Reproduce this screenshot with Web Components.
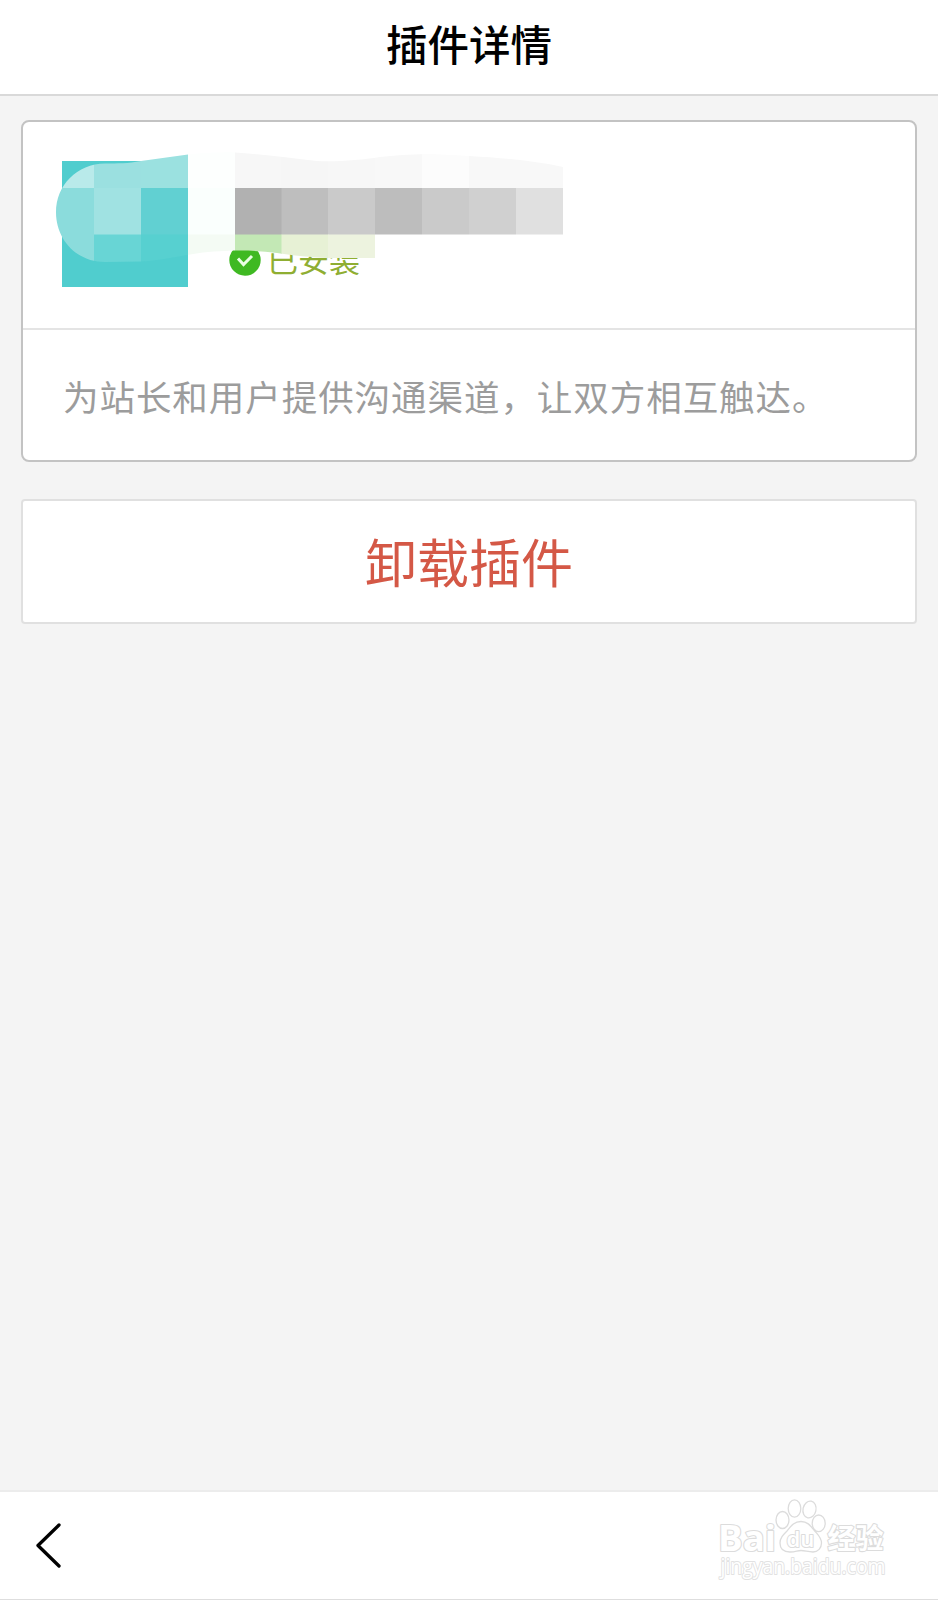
<!DOCTYPE html>
<html lang="zh-CN">
<head>
<meta charset="utf-8">
<title>插件详情</title>
<style>
  html, body { margin: 0; height: 100%; }
  body { background: #f4f4f4; font-family: "Noto Sans CJK SC", sans-serif; }
</style>
</head>
<body>
<plugin-page>
  <nav-header slot="header">插件详情</nav-header>
  <plugin-card>
    <install-status slot="status">已安装</install-status>
    为站长和用户提供沟通渠道，让双方相互触达。
  </plugin-card>
  <danger-button>卸载插件</danger-button>
  <tool-bar slot="footer"><baidu-mark></baidu-mark></tool-bar>
</plugin-page>

<script>
class BaseElement extends HTMLElement {
  constructor() {
    super();
    this.attachShadow({ mode: 'open' });
  }

  connectedCallback() {
    this.shadowRoot.innerHTML = this.render();
  }
}

class PluginPage extends BaseElement {
  render() {
    return `
      <style>
        :host { display: flex; flex-direction: column; height: 1600px; overflow: hidden; }
        main { flex: 1; display: flex; flex-direction: column; gap: 37px; padding: 24px 21px 0; }
      </style>
      <slot name="header"></slot>
      <main><slot></slot></main>
      <slot name="footer"></slot>
    `;
  }
}

class NavHeader extends BaseElement {
  render() {
    return `
      <style>
        :host { display: flex; align-items: center; justify-content: center; box-sizing: border-box; height: 96px; padding-bottom: 6px; background: #fff; border-bottom: 2px solid #d9d9d9; color: #000; font-size: 41.5px; font-weight: 500; line-height: 1; }
      </style>
      <slot></slot>
    `;
  }
}

class PluginCard extends BaseElement {
  // blurred-out plugin name: [x, y, w, h, fill], clipped to the brush stroke
  cells() {
    const list = [
      [47, 141, 47, 47, '#b9eaea'], [94, 141, 47, 47, '#9be0e0'], [141, 141, 47, 47, '#9be1e0'],
      [188, 141, 47, 47, '#fdfffe'], [235, 141, 47, 47, '#f7f7f7'], [281.5, 141, 47, 47, '#f6f6f6'],
      [328, 141, 47, 47, '#f7f7f7'], [375, 141, 47, 47, '#f8f8f8'], [422, 141, 47, 47, '#fcfcfc'],
      [469, 141, 94, 47, '#f8f8f8'],
      [47, 188, 47, 94, '#8bdcdc'], [94, 188, 47, 47, '#a0e2e2'], [141, 188, 47, 47, '#61d0d2'],
      [188, 188, 47, 47, '#fafffd'], [235, 188, 47, 47, '#b1b1b1'], [281.5, 188, 47, 47, '#bebebe'],
      [328, 188, 47, 47, '#cacaca'], [375, 188, 47, 47, '#bdbdbd'], [422, 188, 47, 47, '#cacaca'],
      [469, 188, 47, 47, '#d0d0d0'], [516, 188, 47, 47, '#e0e0e0'],
      [94, 234.5, 47, 47, '#68d5d5'], [141, 234.5, 47, 47, '#57d0d0'], [188, 234.5, 47, 47, '#f4fbf4'],
      [235, 234.5, 47, 47, '#c3e8b5'], [281.5, 234.5, 47, 47, '#e7f1d5'], [328, 234.5, 47, 47, '#edf3df']
    ];
    return list.map(([x, y, w, h, c]) => `<rect x="${x}" y="${y}" width="${w}" height="${h}" fill="${c}"/>`).join('');
  }

  render() {
    return `
      <style>
        :host { display: block; position: relative; box-sizing: border-box; height: 342px; background: #fff; border: 2px solid #c3c3c3; border-radius: 8px; }
        .top { display: flex; align-items: flex-start; gap: 41px; box-sizing: border-box; height: 208px; padding: 39px 0 0 39px; border-bottom: 2px solid #e4e4e4; }
        .logo { width: 126px; height: 126px; background: #50cdce; }
        .info { display: flex; align-items: flex-end; height: 115px; }
        .desc { display: flex; align-items: center; height: 130px; box-sizing: border-box; padding: 2px 0 0 40px; color: #9c9c9c; font-size: 35.5px; letter-spacing: 0.95px; font-weight: 400; line-height: 1; white-space: nowrap; }
        .mask { position: absolute; left: 24px; top: 18px; }
      </style>
      <div class="top">
        <div class="logo"></div>
        <div class="info"><slot name="status"></slot></div>
      </div>
      <div class="desc"><slot></slot></div>
      <svg class="mask" width="518" height="150" viewBox="47 140 518 150">
        <clipPath id="stroke">
          <path d="M105 163.5 C118 163.5 128 163.5 141 161 L188 154.5 C204 153 220 152 235 152.5 C260 154 290 158 317 161 C337 162 361 160 380 157 C405 154 430 153 469 156 C505 158 535 161 563 167 V234.5 H375 V258 H328 C305 257 290 255 277 253 C260 251 245 250 225 251 C195 251 165 261 141 261.5 L105 262 C76 262 56 239 56 212.5 C56 185 77 164 105 163.5 Z"/>
        </clipPath>
        <g clip-path="url(#stroke)">${this.cells()}</g>
      </svg>
    `;
  }
}

class InstallStatus extends BaseElement {
  render() {
    return `
      <style>
        :host { display: flex; align-items: center; gap: 6px; height: 32px; color: #8fae32; font-size: 31px; font-weight: 400; line-height: 32px; }
        svg { display: block; }
        span { padding-bottom: 2px; }
      </style>
      <svg width="32" height="32" viewBox="0 0 32 32">
        <circle cx="16" cy="16" r="15.7" fill="#3fb922"/>
        <path d="M9 14.5 L14.5 20.5 L23 12" fill="none" stroke="#e9ffe4" stroke-width="3"/>
      </svg>
      <span><slot></slot></span>
    `;
  }
}

class DangerButton extends BaseElement {
  render() {
    return `
      <style>
        :host { display: flex; align-items: center; justify-content: center; box-sizing: border-box; height: 125px; padding-bottom: 2px; background: #fff; border: 2px solid #e0e0e0; border-radius: 4px; color: #d45846; font-size: 52px; font-weight: 400; line-height: 1; }
      </style>
      <slot></slot>
    `;
  }
}

class ToolBar extends BaseElement {
  render() {
    return `
      <style>
        :host { display: flex; align-items: center; justify-content: space-between; box-sizing: border-box; height: 110px; padding: 0 46px 0 30px; background: #fff; border-top: 2px solid #ececec; border-bottom: 1px solid #dedede; }
      </style>
      <svg width="40" height="60" viewBox="30 1516 40 60">
        <path d="M59 1525 L38 1545.5 L59 1566" fill="none" stroke="#000" stroke-width="3.3" stroke-linecap="round" stroke-linejoin="round"/>
      </svg>
      <slot></slot>
    `;
  }
}

class BaiduMark extends BaseElement {
  render() {
    return `
      <style>
        :host { display: block; }
        svg { display: block; overflow: visible; }
        text { font-family: "Open Sans", "Noto Sans CJK SC", sans-serif; paint-order: stroke; stroke-linejoin: round; }
      </style>
      <svg width="180" height="96" viewBox="712 1498 180 96" fill="#fff" stroke="#dcdcdc" stroke-width="1.3">
        <text x="718" y="1551" font-size="36" font-weight="700" stroke-width="2.2" textLength="58" lengthAdjust="spacingAndGlyphs">Bai</text>
        <ellipse cx="782.5" cy="1520" rx="6.5" ry="8.5"/>
        <ellipse cx="794.5" cy="1508.5" rx="6.3" ry="8.7"/>
        <ellipse cx="809.5" cy="1509.5" rx="6.5" ry="8.5" transform="rotate(12 809.5 1509.5)"/>
        <ellipse cx="818.7" cy="1523.3" rx="6.5" ry="8.3"/>
        <path d="M801 1521.5 C794 1521.5 791 1526 787 1531 C783 1535 780 1538 780 1543 C780 1549 784 1552 790 1552 C796 1552 797 1550.5 801 1550.5 C805 1550.5 808 1552 813 1552 C818 1552 821.5 1548 821.5 1543 C821.5 1537 817 1534 814 1530 C810 1525 807 1521.5 801 1521.5 Z"/>
        <text x="786.5" y="1547" font-size="22" font-weight="600" stroke-width="2" textLength="28" lengthAdjust="spacingAndGlyphs">du</text>
        <text x="827.5" y="1548.5" font-size="28" font-weight="700" stroke-width="2.2">经验</text>
        <text x="720.5" y="1574" font-size="21.5" font-weight="400" stroke="#e2e2e2" stroke-width="2" textLength="165" lengthAdjust="spacingAndGlyphs">jingyan.baidu.com</text>
      </svg>
    `;
  }
}

customElements.define('plugin-page', PluginPage);
customElements.define('nav-header', NavHeader);
customElements.define('plugin-card', PluginCard);
customElements.define('install-status', InstallStatus);
customElements.define('danger-button', DangerButton);
customElements.define('tool-bar', ToolBar);
customElements.define('baidu-mark', BaiduMark);
</script>
</body>
</html>
